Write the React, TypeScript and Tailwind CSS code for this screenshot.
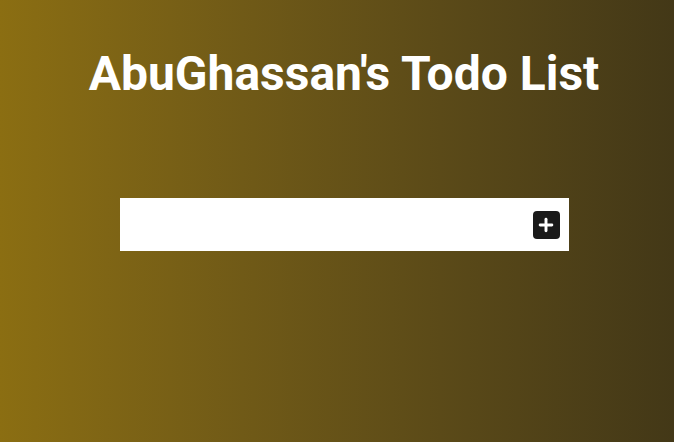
import { Plus } from "lucide-react";

export default function App() {
    return (
        <div className="min-h-screen w-full bg-linear-to-r from-[#8b6e12] to-[#433817] font-['Roboto',sans-serif]">
            <div className="flex flex-col items-center pl-[14px] pt-[50px]">
                <h1 className="text-5xl leading-none font-bold text-white">AbuGhassan's Todo List</h1>

                {/* Add todo */}
                <div className="mt-[100px] flex h-[53px] w-[449px] items-center justify-end bg-white pr-[9px]">
                    <input className="h-full flex-1 bg-transparent px-3 outline-none" />
                    <button className="flex h-[28px] w-[27px] items-center justify-center rounded-[4px] bg-[#1a1a1a]">
                        <Plus className="h-5 w-5 text-white" strokeWidth={3.5} />
                    </button>
                </div>
            </div>
        </div>
    );
}
